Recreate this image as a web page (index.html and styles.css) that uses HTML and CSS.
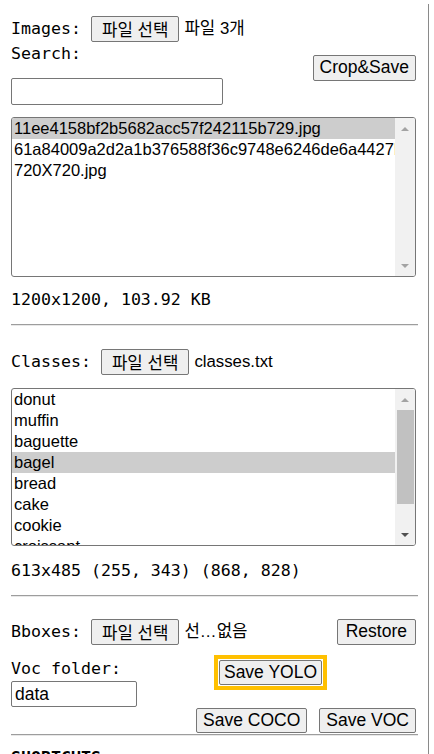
FILE: index.html
```html
<!DOCTYPE html>
<html lang="ko">
<head>
<meta charset="utf-8">
<title>Sidebar</title>
<link rel="stylesheet" href="styles.css">
</head>
<body>
<div class="sidebar">
  <div class="row">
    <span class="label">Images: </span>
    <button class="btn btn-file">파일 선택</button>
    <span class="fname">파일 3개</span>
  </div>

  <div class="search">
    <div class="col">
      <div class="label">Search:</div>
      <input class="field search-field" type="text">
    </div>
    <button class="btn crop">Crop&amp;Save</button>
  </div>

  <div class="listbox images-list">
    <div class="items">
      <div class="item sel">11ee4158bf2b5682acc57f242115b729.jpg</div>
      <div class="item">61a84009a2d2a1b376588f36c9748e6246de6a4427b1.jpg</div>
      <div class="item">720X720.jpg</div>
    </div>
    <div class="sb">
      <span class="arrow up"></span>
      <span class="track"></span>
      <span class="arrow down"></span>
    </div>
  </div>

  <div class="info">1200x1200, 103.92 KB</div>
  <hr class="sep">

  <div class="row classes-row">
    <span class="label">Classes: </span>
    <button class="btn btn-file">파일 선택</button>
    <span class="fname">classes.txt</span>
  </div>

  <div class="listbox classes-list">
    <div class="items">
      <div class="item">donut</div>
      <div class="item">muffin</div>
      <div class="item">baguette</div>
      <div class="item sel">bagel</div>
      <div class="item">bread</div>
      <div class="item">cake</div>
      <div class="item">cookie</div>
      <div class="item">croissant</div>
    </div>
    <div class="sb">
      <span class="arrow up"></span>
      <span class="track"><span class="thumb"></span></span>
      <span class="arrow down active"></span>
    </div>
  </div>

  <div class="info info2">613x485 (255, 343) (868, 828)</div>
  <hr class="sep sep2">

  <div class="row bboxes-row">
    <span class="label">Bboxes: </span>
    <button class="btn btn-file">파일 선택</button>
    <span class="fname">선…없음</span>
    <button class="btn restore">Restore</button>
  </div>

  <div class="voc">
    <div class="col">
      <div class="label voc-label">Voc folder:</div>
      <input class="field voc-field" type="text" value="data">
    </div>
    <div class="highlight">
      <button class="btn yolo">Save YOLO</button>
    </div>
  </div>

  <div class="save-row">
    <button class="btn save">Save COCO</button>
    <button class="btn save">Save VOC</button>
  </div>
  <hr class="sep sep3">

  <div class="shortcuts">SHORTCUTS</div>
</div>
</body>
</html>
```

FILE: styles.css
```css
html, body {
  margin: 0;
  background: #fff;
  color: #000;
}

.sidebar {
  margin-top: 4px;
  width: 429px;
  box-sizing: border-box;
  padding: 12px 0 40px 11px;
  border-right: 1px solid #8a8a8a;
  font: 16.6px/22px "DejaVu Sans Mono", monospace;
}

.label {
  white-space: pre;
}

.row {
  display: flex;
  align-items: center;
  height: 26px;
  width: 405px;
}

.btn {
  box-sizing: border-box;
  height: 26px;
  padding: 0 6px;
  margin: 0;
  font: 17.5px/1 "Liberation Sans", Arial, sans-serif;
  color: #000;
  background: #efefef;
  border: 1px solid #767676;
  border-radius: 2px;
}

.btn-file {
  font-family: "Noto Sans CJK KR", sans-serif;
  font-size: 16.8px;
  padding: 0 10px;
}

.fname {
  margin-left: 5px;
  font: 16.8px/22px "Liberation Sans", "Noto Sans CJK KR", sans-serif;
}

.search {
  display: flex;
  justify-content: space-between;
  align-items: flex-start;
  width: 405px;
  margin-top: 1px;
}

.crop {
  margin-top: 12px;
}

.field {
  display: block;
  box-sizing: border-box;
  margin: 0;
  padding: 0 3px;
  border: 1px solid #767676;
  border-radius: 2px;
  font: 17.5px "Liberation Sans", Arial, sans-serif;
  color: #000;
  background: #fff;
}

.search-field {
  width: 212px;
  height: 27px;
  margin-top: 13px;
}

.listbox {
  display: flex;
  width: 405px;
  box-sizing: border-box;
  border: 1px solid #767676;
  border-radius: 3px;
  overflow: hidden;
  margin-top: 12px;
  font: 16.5px/21px "Liberation Sans", Arial, sans-serif;
}

.images-list {
  height: 160px;
}

.classes-list {
  height: 158px;
  margin-top: 13px;
}

.items {
  flex: 1;
  min-width: 0;
  overflow: hidden;
}

.item {
  height: 21px;
  padding: 0 2px;
  white-space: nowrap;
  overflow: hidden;
}

.item.sel {
  background: #cdcdcd;
}

.sb {
  width: 20px;
  flex: none;
  display: flex;
  flex-direction: column;
  background: #f1f1f1;
}

.arrow {
  height: 21px;
  flex: none;
  display: flex;
  align-items: center;
  justify-content: center;
}

.arrow::before {
  content: "";
  width: 0;
  height: 0;
  border-left: 4.5px solid transparent;
  border-right: 4.5px solid transparent;
}

.arrow.up::before {
  border-bottom: 4.5px solid #a3a3a3;
}

.arrow.down::before {
  border-top: 4.5px solid #a3a3a3;
}

.arrow.down.active::before {
  border-top-color: #505050;
}

.track {
  flex: 1;
  display: flex;
  flex-direction: column;
}

.thumb {
  height: 94px;
  margin: 0 1px 0 2px;
  background: #c1c1c1;
}

.info {
  margin-top: 12px;
}

.info2 {
  margin-top: 14px;
}

.sep {
  width: 407px;
  height: 0;
  margin: 13px 0 0;
  border: 0;
  border-top: 1px solid #9d9d9d;
  border-bottom: 1px solid #e8e8e8;
}

.classes-row {
  margin-top: 23px;
}

.bboxes-row {
  margin-top: 22px;
}

.restore {
  margin-left: auto;
  padding: 0 8px;
}

.voc {
  display: flex;
  align-items: flex-start;
  width: 405px;
  margin-top: 10px;
}

.voc-label {
  margin-top: 3px;
}

.voc-field {
  width: 126px;
  height: 26px;
  margin-top: 1px;
}

.highlight {
  margin-left: 77px;
  padding: 1px;
  border: 4px solid #ffc000;
}

.yolo {
  display: block;
  height: 25px;
  width: 103px;
  padding: 0;
}

.save-row {
  display: flex;
  justify-content: flex-end;
  gap: 12px;
  width: 405px;
  margin-top: 1px;
}

.save {
  height: 25px;
}

.sep3 {
  margin-top: 1px;
}

.shortcuts {
  margin-top: 11px;
  font-weight: bold;
}
```
